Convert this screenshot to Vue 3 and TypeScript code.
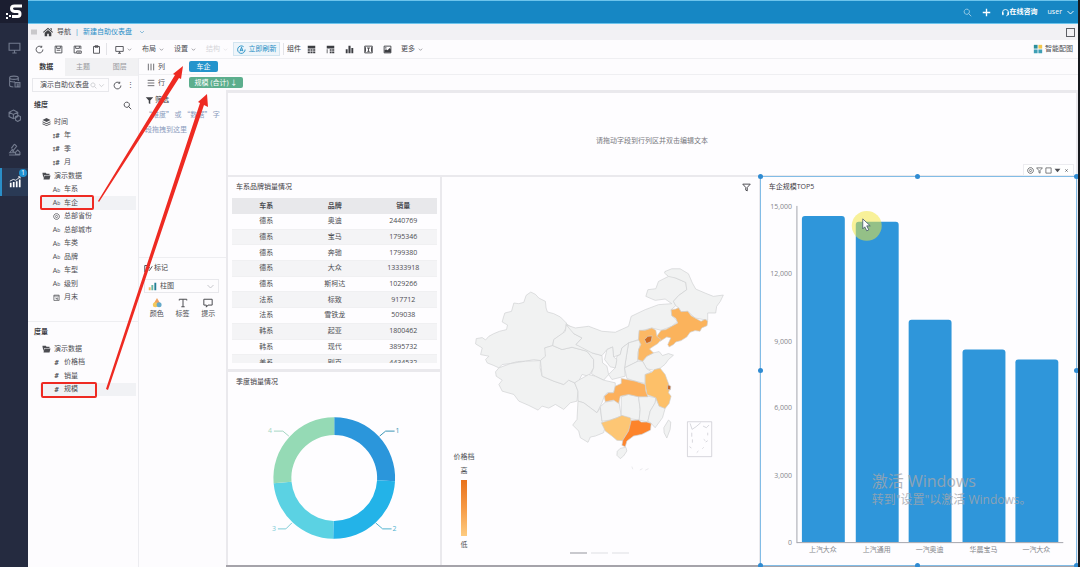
<script setup lang="ts">
import { ref } from 'vue'

interface Field { icon: string; name: string; level: number; active?: boolean }

const icons: Record<string, string> = {
  monitor: 'M1 2h10v6.500h-10zM4 11h4M6 8.500v2.500',
  database: 'M1.500 2.500c0-2 8-2 8 0s-8 2-8 0v7c0 1 2 1.500 3.500 1.500M1.500 5c0 1.500 4 1.500 5 1.300M9.500 2.500v3M6.500 7h4.500v4h-4.500zM8 8.500h2M8 10h2',
  cubes: 'M5 1l4 2v4l-4 2-4-2v-4zM1 3l4 2 4-2M5 5v4M7 7l2.500-1 2 1v3l-2.500 1.500-2-1.200z',
  flask: 'M6 1l2 2-4 5M3 5l3-4M1 11h10M1.500 9l2.500-3 2 3zM7 8.500l2-2 2 2v2h-4z',
  refresh: 'M10.500 6a4.500 4.500 0 1 1-1.500-3.300M9 1v2h-2',
  save: 'M1.500 1.500h9v9h-9zM3.500 1.500v3h5v-3M3.500 7h5',
  saveas: 'M1.500 1.500h9v4M1.500 1.500v9h3M3.500 1.500v3h5v-3M5 8h6v3h-6zM7 9.500h2',
  copy: 'M2 2h8v9h-8zM4 1h4v2h-4z',
  text: 'M1 1.500h10v9h-10zM4 4h4M6 4v4.500M4.500 8.500h3M2 3v6M10 3v6',
  search: 'M5 1.500a3.500 3.500 0 1 0 .1 0M7.500 7.500l3.500 3.500',
  plus: 'M6 1v10M1 6h10',
  headset: 'M2 8v-2a4 4 0 0 1 8 0v2l-1 1.500-2 1M2 6h1v3h-1zM9 6h1v3h-1z',
  chevron: 'M2 4l4 4 4-4',
  square: 'M1.500 1.500h9v9h-9z',
  columns: 'M2 1v10M6 1v10M10 1v10',
  rows: 'M1 2h10M1 6h10M1 10h10',
  comment: 'M1 1.500h10v7h-5l-2 2.500v-2.500h-3z',
  letter: 'M1.500 3v-1.500h9v1.500M6 1.500v9M4 10.500h4',
  target: 'M6 1a5 5 0 1 0 .1 0M6 4a2 2 0 1 0 .1 0',
  funnel: 'M1 1.500h10l-4 4.500v4.500l-2-1v-3.500z',
  edit: 'M1 11v-9h7M4 5h4M4 8h2M7 9l4-6',
}

const nav = ['monitor', 'database', 'cubes', 'flask']
const panelTabs = ['数据', '主题', '图层']
const dimensions: Field[] = [
  { icon: 'layers', name: '时间', level: 0 },
  { icon: 'date', name: '年', level: 1 },
  { icon: 'date', name: '季', level: 1 },
  { icon: 'date', name: '月', level: 1 },
  { icon: 'folder', name: '演示数据', level: 0 },
  { icon: 'abc', name: '车系', level: 1 },
  { icon: 'abc', name: '车企', level: 1, active: true },
  { icon: 'geo', name: '总部省份', level: 1 },
  { icon: 'abc', name: '总部城市', level: 1 },
  { icon: 'abc', name: '车类', level: 1 },
  { icon: 'abc', name: '品牌', level: 1 },
  { icon: 'abc', name: '车型', level: 1 },
  { icon: 'abc', name: '级别', level: 1 },
  { icon: 'cal', name: '月末', level: 1 },
]
const measures: Field[] = [
  { icon: 'folder', name: '演示数据', level: 0 },
  { icon: 'num', name: '价格档', level: 1 },
  { icon: 'num', name: '销量', level: 1 },
  { icon: 'num', name: '规模', level: 1, active: true },
]
const groups = [
  { title: '维度', cls: 'dims', fields: dimensions, search: true },
  { title: '度量', cls: 'meas', fields: measures, search: false },
]

const sales = [
  ['德系', '奥迪', '2440769'], ['德系', '宝马', '1795346'], ['德系', '奔驰', '1799380'],
  ['德系', '大众', '13333918'], ['德系', '斯柯达', '1029266'], ['法系', '标致', '917712'],
  ['法系', '雪铁龙', '509038'], ['韩系', '起亚', '1800462'], ['韩系', '现代', '3895732'],
  ['美系', '别克', '4434532'],
]

const bars = [
  { name: '上汽大众', value: 14560 }, { name: '上汽通用', value: 14310 },
  { name: '一汽奥迪', value: 9940 }, { name: '华晨宝马', value: 8570 },
  { name: '一汽大众', value: 8125 },
].map((b, i) => ({ ...b, x: Math.round(802 + i * 53.5), h: Math.round((b.value / 15000) * 337) }))
const ticks = [15000, 12000, 9000, 6000, 3000, 0].map((v) => ({
  label: v.toLocaleString('en-US'), y: Math.round(543 - (v / 15000) * 337),
}))
const barPath = (x: number, h: number) =>
  `M${x} 543v${-(h - 3)}q0-3 3-3h37q3 0 3 3v${h - 3}z`

const polar = (r: number, deg: number) => {
  const a = ((deg - 90) * Math.PI) / 180
  return `${(334.5 + r * Math.cos(a)).toFixed(2)} ${(478 + r * Math.sin(a)).toFixed(2)}`
}
const ring = (a: number, b: number) =>
  `M${polar(61, a)}A61 61 0 0 1 ${polar(61, b)}L${polar(43, b)}A43 43 0 0 0 ${polar(43, a)}Z`
const slices = [
  { d: ring(0, 93), color: '#2b96db' }, { d: ring(93, 181), color: '#23b3e8' },
  { d: ring(181, 265), color: '#5bd2e3' }, { d: ring(265, 360), color: '#95dab5' },
]
const sliceLabels = [
  { n: '1', x: 398, y: 433, line: 'M380 436l6-5h9', color: '#3a95b5' },
  { n: '2', x: 395, y: 531, line: 'M376 523l7 6h9', color: '#4fb3cf' },
  { n: '3', x: 274, y: 531, line: 'M292 523l-6 6h-8', color: '#7ccbd6' },
  { n: '4', x: 270, y: 433, line: 'M289 436l-6-5h-9', color: '#a5d6c2' },
]

const plain = '#f1f2f2'
const provinces = [
  { d: 'M110 253L112 237 130 234 140 241 150 230 165 222 182 215 203 210 206 196 190 187 194 172 198 160 218 155 225 130 240 132 255 128 262 107 276 97 290 104 300 115 320 125 322 145 326 157 345 162 365 172 383 190 382 205 372 222 345 240 342 258 318 265 324 280 320 292 305 303 285 300 260 305 236 306 215 312 190 315 180 325 165 318 145 310 140 300 150 290 125 285 130 265Z', fill: plain },
  { d: 'M180 325L215 312 260 305 305 303 304 325 310 350 345 365 375 375 390 362 408 370 418 395 415 425 395 430 375 450 350 435 330 446 310 440 298 452 270 438 240 425 225 405 190 395 180 375 190 362 172 350 170 337Z', fill: plain },
  { d: 'M318 265L342 258 370 270 400 263 445 275 465 300 465 325 450 350 430 345 420 365 408 370 390 362 375 375 345 365 310 350 305 303 320 290Z', fill: plain },
  { d: 'M383 192L400 205 405 222 430 235 412 255 440 262 460 280 490 288 492 310 505 320 510 345 495 362 470 350 458 342 465 325 465 300 445 275 400 263 370 270 342 258 345 240 380 215Z', fill: plain },
  { d: 'M383 196L410 205 450 200 490 215 530 218 570 200 578 170 620 150 660 135 700 132 680 118 650 122 622 110 628 90 652 87 660 65 690 50 680 35 712 55 742 68 745 90 720 108 705 125 712 138 698 150 700 168 718 185 700 200 668 212 640 205 602 215 600 240 570 250 550 265 545 285 525 292 522 262 505 270 490 288 460 280 412 255 430 235 405 222Z', fill: plain },
  { d: 'M680 35L700 27 725 27 750 42 762 70 772 88 800 100 825 110 855 106 846 125 835 140 832 160 808 160 808 182 770 175 748 155 728 156 720 144 712 138 705 125 720 108 745 90 742 68 712 55 690 50 678 40Z', fill: plain },
  { d: 'M570 250L605 240 605 255 598 280 598 305 558 325 565 280Z', fill: plain },
  { d: 'M550 265L570 250 565 280 558 325 560 350 520 360 510 345 530 325 535 290 545 285Z', fill: plain },
  { d: 'M505 270L522 262 525 292 535 300 530 325 515 322 498 300Z', fill: plain },
  { d: 'M625 290L645 280 662 276 672 288 690 282 705 287 690 300 680 314 665 326 645 332 625 328 612 305Z', fill: plain },
  { d: 'M558 325L598 305 612 305 625 328 640 337 620 345 620 372 590 365 565 357Z', fill: plain },
  { d: 'M408 370L420 362 450 345 470 350 495 362 530 370 530 380 525 400 505 400 497 410 490 430 485 440 475 460 455 445 435 430 418 425 418 395Z', fill: plain },
  { d: 'M418 425L435 430 455 445 475 460 485 445 490 485 500 500 495 520 470 530 455 533 448 549 425 535 420 515 402 497 415 480Z', fill: plain },
  { d: 'M485 442L500 428 520 425 540 420 548 470 515 482 490 485Z', fill: plain },
  { d: 'M548 412L570 405 600 412 605 450 602 482 575 478 548 468Z', fill: plain },
  { d: 'M600 412L628 410 652 415 650 430 635 455 628 488 602 482 605 450Z', fill: plain },
  { d: 'M652 415L662 440 680 447 672 475 650 505 638 492 628 485 635 455 650 430Z', fill: plain },
  { d: 'M545 567L562 564 565 575 555 590 545 598 535 588 536 576Z', fill: plain },
  { d: 'M690 482L697 488 695 510 685 536 677 520 676 505Z', fill: plain },
  { d: 'M698 150L712 148 720 144 728 156 748 155 758 168 775 178 788 185 800 179 808 184 806 198 790 205 785 215 770 213 755 218 745 232 728 243 712 247 705 255 692 262 688 255 697 235 685 232 665 245 655 230 668 212 682 210 700 200 718 190 712 176 700 168Z', fill: '#fbb35c' },
  { d: 'M602 212L620 212 640 205 652 212 655 230 668 240 658 252 645 260 633 268 645 280 625 290 612 305 598 300 600 270 607 255 600 240Z', fill: '#fcb864' },
  { d: 'M618 240L628 230 641 229 638 246 624 252Z', fill: '#cf6a20' },
  { d: 'M620 345L640 338 648 330 665 326 680 345 690 372 695 385 690 400 698 410 692 432 680 447 662 440 652 415 625 405 620 372Z', fill: '#fdc069' },
  { d: 'M688 376L697 380 696 391 687 390Z', fill: '#c56526' },
  { d: 'M497 410L510 400 525 400 530 380 548 372 548 357 565 360 590 365 620 375 622 395 628 412 600 412 570 405 545 410 540 432 525 422 500 427Z', fill: '#fcb05c' },
  { d: 'M488 490L515 482 535 475 550 468 575 475 580 490 570 515 552 544 535 543 520 530 500 515Z', fill: '#fdc674' },
  { d: 'M578 483L600 482 608 488 625 488 638 492 636 512 610 525 585 530 565 545 560 562 550 558 553 542 570 515Z', fill: '#fd842b' },
]

const source = ref('demo')
const mark = ref('bar')
</script>

<template>
  <div class="app">
    <nav class="side">
      <a class="logo" href="#" aria-label="首页">
        <svg viewBox="0 0 20 18"><path d="M18 3H10.500Q7.500 3 7.500 5.500T10.500 8.500H13.500Q16 8.500 16 11T13.500 13.500H8" fill="none" stroke="#fff" stroke-width="3" /><path d="M2 10h2v2h-2zM5 12h2v2h-2zM2 14h2v2h-2z" fill="#fff" /></svg>
      </a>
      <a v-for="n in nav" :key="n" class="nav" href="#" :aria-label="n"><svg class="ic" viewBox="0 0 12 12"><path :d="icons[n]" /></svg></a>
      <a class="nav on" href="#" aria-label="分析">
        <svg viewBox="0 0 14 14" class="chart-ic"><path d="M1 8h2v5h-2zM4.500 7h2v6h-2zM8 6h2v7h-2zM11.500 4h2v9h-2z" fill="#fff" /><path d="M1 6l4-2 3 1 5-4M10.500 1h2.500v2" fill="none" stroke="#fff" /></svg>
        <span class="badge">1</span>
      </a>
    </nav>

    <div class="main">
      <header class="top">
        <button aria-label="搜索" class="dim"><svg class="ic" viewBox="0 0 12 12"><path :d="icons.search" /></svg></button>
        <button aria-label="新建" class="bold"><svg class="ic" viewBox="0 0 12 12"><path :d="icons.plus" /></svg></button>
        <button class="help"><svg class="ic" viewBox="0 0 12 12"><path :d="icons.headset" /></svg>在线咨询</button>
        <button class="user">user <svg class="ic" viewBox="0 0 12 12"><path :d="icons.chevron" /></svg></button>
      </header>

      <div class="crumbs">
        <svg class="ic grip" viewBox="0 0 12 12"><path :d="icons.columns" /></svg>
        <svg class="home" viewBox="0 0 12 12"><path d="M6 1l6 5-.7.8-5.300-4.300-5.300 4.300-.7-.8zM2 7l4-3.500 4 3.500v4h-3v-3h-2v3h-3zM8.500 1.500h2v3z" /></svg>
        <a href="#">导航</a><i>|</i><a href="#" class="cur">新建自助仪表盘</a>
        <svg class="ic mini" viewBox="0 0 12 12"><path :d="icons.chevron" /></svg>
        <button class="max" aria-label="最大化"></button>
      </div>

      <div class="tools">
        <div class="set">
          <button v-for="n in ['refresh', 'save', 'saveas', 'copy']" :key="n" :aria-label="n"><svg class="ic" viewBox="0 0 12 12"><path :d="icons[n]" /></svg></button>
        </div>
        <div class="drops">
          <button aria-label="预览"><svg class="ic" viewBox="0 0 12 12"><path :d="icons.monitor" /></svg><svg class="ic caret" viewBox="0 0 12 12"><path :d="icons.chevron" /></svg></button>
          <button v-for="n in ['布局', '设置', '结构']" :key="n" :class="{ off: n === '结构' }">{{ n }}<svg class="ic caret" viewBox="0 0 12 12"><path :d="icons.chevron" /></svg></button>
        </div>
        <button class="now"><svg class="ic" viewBox="0 0 12 12"><path d="M10.800 6a5 5 0 1 1-2-3.800M4 8.500l2-5.500 2 5.500M4.500 7h3" /></svg>立即刷新</button>
        <div class="set parts">
          <span>组件</span>
          <button aria-label="表格"><svg class="solid" viewBox="0 0 12 12"><path d="M1 1h10v3.500h-10zM1 5.500h2.800v2.200h-2.800zM4.600 5.500h2.800v2.200h-2.800zM8.200 5.500h2.800v2.200h-2.800zM1 8.500h2.800v2.500h-2.800zM4.600 8.500h2.800v2.500h-2.800zM8.200 8.500h2.800v2.500h-2.800z" /></svg></button>
          <button aria-label="交叉表"><svg class="solid" viewBox="0 0 12 12"><path d="M1 1h10v3.500h-10zM1 5.500h1v5.500h-1zM5 5.500h2.500v2.200h-2.500zM8.200 5.500h2.800v2.200h-2.800zM5 8.800h2.500v2.200h-2.500zM8.200 8.800h2.800v2.200h-2.800z" /></svg></button>
          <button aria-label="图表"><svg class="solid" viewBox="0 0 12 12"><path d="M1 5.500h2.500v5.500h-2.500zM4.600 1h2.800v10h-2.800zM8.500 4h2.500v7h-2.500z" /></svg></button>
          <button aria-label="文本"><svg class="ic" viewBox="0 0 12 12"><path :d="icons.text" /></svg></button>
          <button aria-label="图片"><svg class="ic" viewBox="0 0 12 12"><path :d="icons.square" /><path class="fillp" d="M2 10v-3l2-1.500 2 1.500 3-3 1.500 2v4zM3 3h1.500v1.500h-1.500z" /></svg></button>
        </div>
        <button class="more">更多<svg class="ic caret" viewBox="0 0 12 12"><path :d="icons.chevron" /></svg></button>
        <button class="smart"><svg viewBox="0 0 12 12"><path d="M1 1h4.500v4.500h-4.500z" fill="#2d8f9c" /><path d="M6.500 1h4.500v4.500h-4.500z" fill="#f2c64a" /><path d="M1 6.500h4.500v4.500h-4.500zM6.500 6.500h4.500v4.500h-4.500z" fill="#3f9fb5" /></svg>智能配图</button>
      </div>

      <div class="work">
        <aside class="data">
          <div class="ptabs"><button v-for="(t, i) in panelTabs" :key="t" :class="{ on: i === 0 }">{{ t }}</button></div>
          <div class="src">
            <div class="pick">
              <select v-model="source" aria-label="数据源"><option value="demo">演示自助仪表盘</option></select>
              <svg class="ic" viewBox="0 0 12 12"><path :d="icons.search" /></svg>
              <svg class="ic" viewBox="0 0 12 12"><path :d="icons.chevron" /></svg>
            </div>
            <button aria-label="刷新"><svg class="ic" viewBox="0 0 12 12"><path :d="icons.refresh" /></svg></button>
            <button aria-label="菜单">⋮</button>
          </div>
          <section v-for="g in groups" :key="g.title" :class="g.cls">
            <h3>{{ g.title }}<button v-if="g.search" aria-label="搜索字段"><svg class="ic" viewBox="0 0 12 12"><path :d="icons.search" /></svg></button></h3>
            <ul>
              <li v-for="(f, i) in g.fields" :key="i" :class="{ child: f.level, on: f.active }">
                <svg v-if="f.icon === 'layers'" class="solid" viewBox="0 0 12 12"><path d="M6 0l6 3-6 3-6-3zM0 5l6 3 6-3v1.500l-6 3-6-3zM0 8l6 3 6-3v1.200l-6 2.800-6-2.800z" /></svg>
                <svg v-else-if="f.icon === 'folder'" class="solid" viewBox="0 0 12 12"><path d="M0 1h5l1 1.500h4.500v2h-8l-1 5-1.500-7zM3 5.200h9l-1.500 6h-9z" /></svg>
                <svg v-else-if="f.icon === 'geo'" class="ic" viewBox="0 0 12 12"><path :d="icons.target" /></svg>
                <svg v-else-if="f.icon === 'cal'" class="ic" viewBox="0 0 12 12"><path d="M1.500 2h9v9h-9zM1.500 3.500h9M4 7h2v2M8 6v4" /></svg>
                <b v-else-if="f.icon === 'date'">⦂#</b>
                <b v-else-if="f.icon === 'num'" class="num">#</b>
                <b v-else class="abc">A<small>b</small></b>
                <span>{{ f.name }}</span>
              </li>
            </ul>
          </section>
        </aside>

        <div class="stage">
          <div class="shelf"><svg class="ic" viewBox="0 0 12 12"><path :d="icons.columns" /></svg><span>列</span><button class="pill blue">车企</button></div>
          <div class="shelf"><svg class="ic" viewBox="0 0 12 12"><path :d="icons.rows" /></svg><span>行</span><button class="pill green">规模 (合计) ↓</button></div>
          <div class="lower">
            <aside class="cfg">
              <section class="filter">
                <h3><svg class="solid" viewBox="0 0 12 12"><path :d="icons.funnel" /></svg>筛选</h3>
                <p>“维度” 或 “数据” 字<br>段拖拽到这里</p>
              </section>
              <section class="marks">
                <h3><svg class="ic" viewBox="0 0 12 12"><path :d="icons.edit" /></svg>标记</h3>
                <div class="pick">
                  <svg viewBox="0 0 12 12"><path d="M1 7h2.500v4h-2.500z" fill="#f0b65c" /><path d="M4.500 4h2.500v7h-2.500z" fill="#68b6a0" /><path d="M8.500 1h2.500v10h-2.500z" fill="#237f96" /></svg>
                  <select v-model="mark" aria-label="图形"><option value="bar">柱图</option></select>
                  <svg class="ic" viewBox="0 0 12 12"><path :d="icons.chevron" /></svg>
                </div>
                <div class="enc">
                  <button><svg viewBox="0 0 12 12"><path d="M6 0l3.500 6h-7z" fill="#efa15d" /><circle cx="4" cy="8" r="3" fill="#f4c95c" /><circle cx="8.500" cy="8" r="3" fill="#65a9c9" /></svg>颜色</button>
                  <button><svg class="ic" viewBox="0 0 12 12"><path :d="icons.letter" /></svg>标签</button>
                  <button><svg class="ic" viewBox="0 0 12 12"><path :d="icons.comment" /></svg>提示</button>
                </div>
              </section>
            </aside>

            <div class="canvas">
              <div class="card note"><p>请拖动字段到行列区并双击编辑文本</p></div>
              <div class="board">
                <div class="stack">
                  <section class="card list">
                    <h2>车系品牌销量情况</h2>
                    <div class="clip">
                      <table>
                        <thead><tr><th>车系</th><th>品牌</th><th>销量</th></tr></thead>
                        <tbody><tr v-for="r in sales" :key="r[1]"><td v-for="c in r" :key="c">{{ c }}</td></tr></tbody>
                      </table>
                    </div>
                  </section>
                  <section class="card">
                    <h2>季度销量情况</h2>
                    <svg class="plot" viewBox="228 392 213 173">
                      <path v-for="s in slices" :key="s.color" :d="s.d" :fill="s.color" />
                      <g v-for="l in sliceLabels" :key="l.n">
                        <path :d="l.line" fill="none" :stroke="l.color" />
                        <text :x="l.x" :y="l.y" :fill="l.color" text-anchor="middle">{{ l.n }}</text>
                      </g>
                    </svg>
                  </section>
                </div>

                <section class="card map">
                  <h2><button aria-label="筛选"><svg class="ic" viewBox="0 0 12 12"><path :d="icons.funnel" /></svg></button></h2>
                  <svg class="plot" viewBox="9 -186 951 1101">
                    <path v-for="(p, i) in provinces" :key="i" :d="p.d" :fill="p.fill" stroke="#cfd0d2" stroke-width="2" stroke-linejoin="round" />
                    <path d="M747 487h73v105h-73zM755 492l6 18 12-8 14-12M812 497l-8 8-10-5M760 520v12M762 540v10M775 580l5-5M792 568l4-4M796 540l5 4M808 520v8M802 548l6-4M753 562l6 4" fill="none" stroke="#c4c4cc" stroke-width="2" />
                    <path d="M580 622l3 8M604 632l8-4M620 633l10-5" stroke="#e0e0e4" stroke-width="2" />
                  </svg>
                  <div class="legend"><span>价格档</span><span>高</span><i></i><span>低</span></div>
                  <div class="pager"><i class="on"></i><i></i><i></i></div>
                </section>

                <section class="card sel">
                  <h2>车企规模TOP5</h2>
                  <svg class="plot" viewBox="761 198 316 367">
                    <g fill="#85878c">
                      <text v-for="t in ticks" :key="t.label" x="792" :y="t.y + 3" text-anchor="end">{{ t.label }}</text>
                      <text v-for="b in bars" :key="b.name" :x="b.x + 21" y="553" text-anchor="middle">{{ b.name }}</text>
                    </g>
                    <path d="M797 206v338M797 543.500h267" fill="none" stroke="#a4a6ad" />
                    <path v-for="b in bars" :key="b.x" :d="barPath(b.x, b.h)" fill="#2f96da" />
                    <circle cx="867" cy="226" r="15" fill="#f1e63c" fill-opacity=".52" />
                    <path d="M863 219v10l2-2 2 4 2-1-2-4h3.500z" fill="#fff" stroke="#44576b" stroke-width=".8" />
                  </svg>
                  <div class="wtools">
                    <button aria-label="定位"><svg class="ic" viewBox="0 0 12 12"><path :d="icons.target" /></svg></button>
                    <button aria-label="筛选"><svg class="ic" viewBox="0 0 12 12"><path :d="icons.funnel" /></svg></button>
                    <button aria-label="放大"><svg class="ic" viewBox="0 0 12 12"><path :d="icons.square" /></svg></button>
                    <button aria-label="更多"><svg class="solid" viewBox="0 0 12 12"><path d="M1 3h10l-5 6z" /></svg></button>
                    <button aria-label="关闭"><svg class="ic" viewBox="0 0 12 12"><path d="M4 4l4 4M8 4l-4 4" /></svg></button>
                  </div>
                  <i v-for="h in ['tl', 'tc', 'tr', 'ml', 'mr', 'bl', 'bc', 'br']" :key="h" class="h" :class="h"></i>
                  <div class="activate"><strong>激活 Windows</strong><span>转到"设置"以激活 Windows。</span></div>
                </section>
              </div>
            </div>
          </div>
        </div>
      </div>
    </div>

    <svg class="guides" viewBox="0 0 250 410" width="250" height="410">
      <rect x="41" y="196" width="52" height="13" rx="1" />
      <rect x="42" y="383" width="54" height="14" rx="1" />
      <path d="M98 201L175 75 173 74 183 66 181 79 179 78 99 202zM106 389L200 103 198 102 207 94 208 107 204 105 108 390z" />
    </svg>
  </div>
</template>

<style>
body { margin: 0; background: #fff; }
</style>

<style scoped>
.app { position: relative; display: flex; min-height: 100vh; box-sizing: border-box; border-right: 2px solid #17191d; background: #fdfcfe; color: #4c4d52; font: 7px/10px "Open Sans", "Noto Sans CJK SC", sans-serif; overflow: hidden; }
.app *, .app *::before { box-sizing: border-box; }
button, select { font: inherit; color: inherit; background: none; border: 0; padding: 0; margin: 0; appearance: none; display: flex; align-items: center; justify-content: center; white-space: nowrap; }
a { color: inherit; text-decoration: none; }
h2, h3, p, ul { margin: 0; padding: 0; list-style: none; font-size: 7px; }
svg { flex: none; display: block; }
.ic { width: 9px; height: 9px; fill: none; stroke: currentColor; stroke-width: 1.2; }
.solid { width: 9px; height: 9px; fill: currentColor; }
.fillp { fill: currentColor; stroke: none; }
.caret { width: 5px; height: 5px; }

.side { width: 28px; flex: none; background: #252b40; color: #737b8e; }
.logo { display: flex; align-items: center; justify-content: center; height: 23px; margin-bottom: 7px; background: #1b1e30; }
.logo svg { width: 20px; height: 18px; }
.nav { position: relative; display: flex; align-items: center; justify-content: center; height: 34px; }
.nav .ic { width: 13px; height: 13px; stroke-width: 1; }
.on .chart-ic { width: 12px; height: 12px; }
.nav.on { height: 28px; margin-top: 2px; background: #2a3a55; border-left: 2px solid #2a8fc8; }
.badge { position: absolute; right: 1px; top: 1px; width: 8px; height: 8px; border-radius: 4px; background: #1f91d0; color: #fff; line-height: 8px; text-align: center; }

.main { flex: 1; min-width: 0; display: flex; flex-direction: column; }
.top { height: 24px; display: flex; align-items: center; justify-content: flex-end; gap: 10px; padding-right: 3px; background: #1687c4; border-top: 1px solid #6cc4ec; border-bottom: 1px solid #6cc4ec; color: #fff; }
.top .dim { opacity: .6; }
.top .bold .ic { stroke-width: 1.8; }
.top .help { font-weight: bold; }
.top .user { gap: 4px; }
.crumbs { height: 16px; display: flex; align-items: center; padding: 0 3px; background: #f2f1f4; }
.grip { width: 6px; height: 6px; margin-right: 3px; stroke-width: 1; }
.home { width: 10px; height: 10px; margin: 0 4px 0 3px; fill: #3f4044; }
.crumbs i { width: 12px; text-align: center; font-style: normal; color: #2a8fc8; }
.crumbs .cur { color: #2a8fc8; }
.mini { width: 6px; height: 6px; margin-left: 7px; color: #4b9cc6; }
.max { width: 9px; height: 9px; border: 1px solid #5d5e64; margin-left: auto; }

.tools { height: 18px; display: flex; align-items: center; padding: 0 5px; }
.set { display: flex; gap: 7px; align-items: center; }
.set button { width: 12px; height: 12px; }
.set:first-child { padding-right: 4px; border-right: 1px solid #e3e3e7; }
.drops { display: flex; gap: 10px; padding: 0 5px 0 8px; }
.drops button, .more { gap: 3px; }
.drops .off { color: #d5d5d9; }
.now { height: 14px; width: 47px; gap: 3px; background: #eef5fa; border: 1px solid #d3e5f0; color: #1f8dc4; }
.parts { margin-left: 3px; padding-left: 3px; border-left: 1px solid #e3e3e7; color: #3c3d42; }
.parts span { margin-right: -3px; }
.more { margin-left: 8px; }
.smart { margin-left: auto; gap: 2px; }
.smart svg { width: 10px; height: 10px; }

.work { flex: 1; display: flex; min-height: 0; }
.data { width: 111px; flex: none; border-right: 1px solid #ececf0; }
.ptabs { display: flex; height: 18px; }
.ptabs button { flex: 1; background: #f1f1f3; color: #97989d; }
.ptabs .on { background: none; color: #3c3d42; font-weight: bold; }
.src { display: flex; align-items: center; gap: 4px; padding: 2px 4px; height: 18px; }
.pick { display: flex; align-items: center; width: 78px; height: 14px; padding: 0 3px 0 7px; border: 1px solid #e8e8ec; }
.pick select { flex: 1; min-width: 0; height: 10px; overflow: hidden; }
.pick .ic { width: 7px; height: 7px; margin-left: 1px; color: #c0c1c6; }
.src > button { width: 9px; }
h3 { display: flex; align-items: center; justify-content: space-between; font-weight: bold; color: #3f4045; height: 18px; }
.data h3 { padding: 0 6px; height: 20px; }
.data ul { display: grid; grid-auto-rows: 1fr; }
.dims ul { height: 189px; }
.meas ul { height: 54px; }
.dims { height: 228px; padding-top: 1px; border-bottom: 1px solid #eeeef1; }
.data li { display: flex; align-items: center; gap: 3px; padding-left: 14px; margin-right: 2px; }
.data li.child { padding-left: 24px; }
.data li.on { background: linear-gradient(90deg, transparent 12px, #f1f2f5 12px); }
.data li .solid { width: 9px; height: 8px; }
.data li .ic, .data li b { width: 9px; height: 7px; line-height: 7px; text-align: center; }
.abc { font-weight: normal; }
.abc small { font-size: 5px; }
.num { font-style: italic; }

.stage { flex: 1; min-width: 0; display: flex; flex-direction: column; }
.shelf { display: flex; align-items: center; height: 16px; padding-left: 8px; border-top: 1px solid #efeff2; }
.shelf .ic { width: 8px; height: 8px; margin-right: 3px; }
.shelf span { width: 31px; }
.pill { height: 11px; border-radius: 2px; color: #fff; }
.blue { background: #2494cc; width: 29px; }
.green { background: #5cae8d; width: 54px; }
.lower { flex: 1; display: flex; }
.cfg { width: 87px; flex: none; }
.filter { height: 168px; padding: 1px 6px; border-bottom: 1px solid #eeeef1; }
.filter h3, .marks h3 { justify-content: flex-start; gap: 1px; font-weight: normal; }
.filter p { line-height: 15px; margin-top: -2px; color: #8a9bbd; white-space: nowrap; font-family: "Noto Sans CJK SC", sans-serif; }
.marks { padding: 1px 5px; }
.marks .pick { width: 75px; margin-top: 2px; padding-left: 3px; gap: 3px; }
.marks .pick svg { width: 9px; height: 9px; }
.enc { display: flex; padding-top: 5px; }
.enc button { flex: 1; flex-direction: column; gap: 1px; }
.enc svg { width: 10px; height: 10px; }

.canvas { flex: 1; min-width: 0; display: flex; flex-direction: column; gap: 2px; padding: 3px 2px 0 2px; background: #eae9ed; border-bottom: 2px solid #a5a3aa; }
.card { background: #fefdff; position: relative; display: flex; flex-direction: column; min-width: 0; min-height: 0; }
.note { flex: 82 1 0; align-items: center; justify-content: center; color: #77787e; }
.note p { margin-top: 14px; }
.board { flex: 388 1 0; min-height: 0; display: grid; grid-template-columns: 213fr 317fr 316fr; grid-template-rows: minmax(0, 1fr); gap: 2px; }
.stack { display: grid; grid-template-rows: minmax(0, 192fr) minmax(0, 193fr); gap: 3px; min-height: 0; }
h2 { height: 20px; flex: none; padding: 0 8px; line-height: 20px; font-weight: normal; color: #3f4045; }
.plot { flex: 1 1 0; min-height: 0; width: 100%; }
.plot text { font-size: 7px; }
.clip { flex: 1; min-height: 0; overflow: hidden; margin: 1px 3px 6px 4px; }
table { width: 100%; height: 173px; border-collapse: collapse; table-layout: fixed; text-align: center; }
th, td { padding: 0; }
thead tr { height: 16px; }
th { background: #e8e8eb; font-weight: bold; }
tbody tr:nth-child(even) { background: #f4f4f6; }
td { border-bottom: 1px solid #f0f0f2; }
.map h2 { display: flex; justify-content: flex-end; }
.legend { position: absolute; left: 11px; bottom: 15px; display: flex; flex-direction: column; align-items: center; gap: 4px; }
.legend i { width: 6px; height: 56px; background: linear-gradient(#e8721c, #f69a45 50%, #fdcb80); }
.pager { position: absolute; left: 128px; bottom: 11px; display: flex; gap: 4px; }
.pager i { width: 17px; height: 2px; background: #eeeef1; }
.pager .on { background: #c9c9ce; }
.sel { outline: 1px solid #82bce6; }
.wtools { position: absolute; right: 2px; top: -13px; height: 12px; padding: 0 3px; display: flex; align-items: center; gap: 2px; background: #fff; border: 1px solid #ececf0; }
.wtools svg { width: 7px; height: 7px; }
.h { position: absolute; width: 5px; height: 5px; border-radius: 3px; background: #2f8bd2; margin: -3px; }
.tl, .tc, .tr { top: 0; }
.ml, .mr { top: 50%; }
.bl, .bc, .br { bottom: 0; }
.tl, .ml, .bl { left: 0; }
.tc, .bc { left: 50%; }
.tr, .mr, .br { right: 0; }
.activate { position: absolute; left: 111px; bottom: 56px; display: flex; flex-direction: column; color: #a3a6ad; white-space: nowrap; opacity: .8; }
.activate strong { font-size: 16px; line-height: 20px; font-weight: normal; }
.activate span { font-size: 12px; line-height: 18px; }
.guides { position: absolute; left: 0; top: 0; pointer-events: none; fill: #ee2a22; }
.guides rect { fill: none; stroke: #ee2a22; stroke-width: 2; }
</style>
